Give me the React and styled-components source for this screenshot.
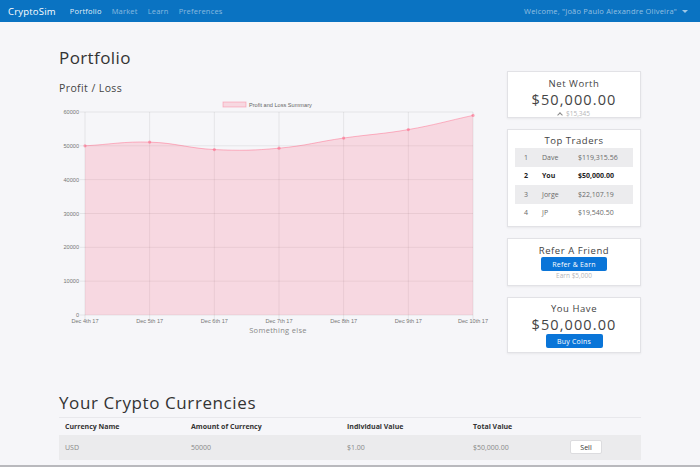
import React from "react";
import styled, { createGlobalStyle } from "styled-components";

const GlobalStyle = createGlobalStyle`
  html, body {
    margin: 0;
    padding: 0;
    background: #f6f6f9;
    font-family: "Open Sans", Lato, sans-serif;
    color: #444;
  }
  * { box-sizing: border-box; }
`;

const Page = styled.div`
  height: 467px;
  overflow: hidden;
  border-bottom: 2px solid #b9b9bd;
`;

const Navbar = styled.nav`
  height: 22px;
  background: #0a73c2;
  display: flex;
  align-items: center;
  padding: 0 8px;
  font-size: 7.5px;
  letter-spacing: 0.2px;
`;

const Brand = styled.span`
  color: #fff;
  font-size: 9.5px;
  margin-right: 14px;
`;

const NavLink = styled.a`
  color: ${(p) => (p.active ? "rgba(255,255,255,0.9)" : "rgba(255,255,255,0.5)")};
  margin-right: 10px;
  text-decoration: none;
`;

const Welcome = styled.span`
  margin-left: auto;
  color: rgba(255, 255, 255, 0.55);
  display: flex;
  align-items: center;
  gap: 5px;
  margin-right: 4px;
`;

const Caret = styled.span`
  width: 0;
  height: 0;
  border-left: 3px solid transparent;
  border-right: 3px solid transparent;
  border-top: 3px solid rgba(255, 255, 255, 0.6);
`;

const Container = styled.main`
  width: 582px;
  margin: 0 auto;
`;

const TopRow = styled.div`
  display: flex;
  gap: 17px;
`;

const LeftCol = styled.div`
  width: 431px;
`;

const RightCol = styled.div`
  width: 134px;
  padding-top: 49px;
  display: flex;
  flex-direction: column;
  gap: 11px;
`;

const PageTitle = styled.h1`
  margin: 26px 0 0;
  font-size: 17px;
  line-height: 20px;
  font-weight: 400;
  letter-spacing: 0.4px;
  color: #333;
`;

const SubTitle = styled.h5`
  margin: 13px 0 0;
  font-size: 10.5px;
  line-height: 14px;
  font-weight: 400;
  letter-spacing: 0.4px;
  color: #444;
`;

const ChartBox = styled.div`
  margin-top: 4px;
  height: 240px;
`;

const Card = styled.div`
  background: #fff;
  border: 1px solid #e2e2e6;
  box-shadow: 0 1px 2px rgba(0, 0, 0, 0.06);
  height: ${(p) => p.h}px;
  display: flex;
  flex-direction: column;
  align-items: center;
  padding: ${(p) => p.pad}px 7px 0;
`;

const CardTitle = styled.div`
  font-size: 9.5px;
  line-height: normal;
  letter-spacing: 0.55px;
  color: #444;
`;

const BigValue = styled.div`
  font-size: 14.5px;
  line-height: normal;
  letter-spacing: 1.1px;
  color: #444;
`;

const Muted = styled.div`
  font-size: 6.5px;
  line-height: normal;
  color: #b5b5b8;
  display: flex;
  align-items: center;
  gap: 4px;
`;

const Chevron = styled.span`
  width: 4px;
  height: 4px;
  border-left: 1.2px solid #888;
  border-top: 1.2px solid #888;
  transform: rotate(45deg);
  margin-top: 3px;
`;

const Traders = styled.table`
  width: 100%;
  border-collapse: collapse;
  margin-top: 1px;
  font-size: 7px;
  color: #666;
`;

const TraderRow = styled.tr`
  background: ${(p) => (p.striped ? "#ececee" : "transparent")};
  font-weight: ${(p) => (p.me ? 700 : 400)};
  color: ${(p) => (p.me ? "#222" : "#6a6a6a")};
  height: 18.5px;
  td { padding: 0; }
  td:first-child { padding-left: 9px; width: 27px; }
  td:nth-child(2) { width: 36px; }
`;

const BlueButton = styled.button`
  background: #0a75d8;
  color: #fff;
  border: none;
  border-radius: 2px;
  font-family: inherit;
  font-size: 7px;
  letter-spacing: 0.2px;
  height: 14px;
  width: ${(p) => p.w}px;
  padding: 0;
`;

const SectionTitle = styled.h2`
  margin: 40px 0 4px;
  font-size: 17px;
  line-height: 20px;
  font-weight: 400;
  letter-spacing: 0.6px;
  color: #333;
`;

const Table = styled.table`
  width: 100%;
  table-layout: fixed;
  border-collapse: collapse;
  font-size: 7px;
`;

const HeadCell = styled.th`
  text-align: left;
  font-weight: 700;
  color: #333;
  height: 17px;
  padding: 0 0 0 6px;
  border-top: 1px solid #e8e8ec;
  width: ${(p) => p.w || "auto"};
`;

const BodyRow = styled.tr`
  background: #ebebed;
  height: 25px;
`;

const Cell = styled.td`
  color: #888;
  padding: 0 0 0 ${(p) => (p.flush ? 0 : 6)}px;
`;

const SellButton = styled.button`
  background: #fff;
  border: 1px solid #dcdcdf;
  border-radius: 2px;
  font-family: inherit;
  font-size: 7px;
  color: #333;
  width: 32px;
  height: 14px;
  padding: 0;
`;

const values = [50000, 51100, 48900, 49300, 52300, 54800, 59000];
const labels = ["Dec 4th 17", "Dec 5th 17", "Dec 6th 17", "Dec 7th 17", "Dec 8th 17", "Dec 9th 17", "Dec 10th 17"];
const X0 = 26;
const X1 = 414;
const Y0 = 13;
const Y1 = 216;

function buildPath(pts) {
  const t = 0.4;
  const cps = pts.map((p, i) => {
    const prev = pts[i - 1] || p;
    const next = pts[i + 1] || p;
    const d01 = Math.hypot(p.x - prev.x, p.y - prev.y);
    const d12 = Math.hypot(next.x - p.x, next.y - p.y);
    const sum = d01 + d12 || 1;
    const fa = (t * d01) / sum;
    const fb = (t * d12) / sum;
    return {
      inX: p.x - fa * (next.x - prev.x),
      inY: p.y - fa * (next.y - prev.y),
      outX: p.x + fb * (next.x - prev.x),
      outY: p.y + fb * (next.y - prev.y),
    };
  });
  let d = `M${pts[0].x},${pts[0].y}`;
  for (let i = 1; i < pts.length; i++) {
    d += ` C${cps[i - 1].outX},${cps[i - 1].outY} ${cps[i].inX},${cps[i].inY} ${pts[i].x},${pts[i].y}`;
  }
  return d;
}

const ProfitChart = () => {
  const step = (X1 - X0) / (values.length - 1);
  const pts = values.map((v, i) => ({ x: X0 + i * step, y: Y1 - (v / 60000) * (Y1 - Y0) }));
  const line = buildPath(pts);
  const area = `${line} L${X1},${Y1} L${X0},${Y1} Z`;
  const ticks = [0, 10000, 20000, 30000, 40000, 50000, 60000];
  return (
    <svg width="431" height="240" viewBox="0 0 431 240" fontFamily="'Liberation Sans', Arial, sans-serif">
      <rect x="164" y="3" width="23" height="5" fill="rgba(255,99,132,0.2)" stroke="rgba(255,99,132,0.45)" strokeWidth="0.8" />
      <text x="190" y="7.5" fontSize="5.6" fill="#666">Profit and Loss Summary</text>
      {ticks.map((v) => {
        const y = Y1 - (v / 60000) * (Y1 - Y0);
        return (
          <g key={v}>
            <line x1={X0 - 5} x2={X1} y1={y} y2={y} stroke="rgba(0,0,0,0.09)" strokeWidth="0.8" />
            <text x={X0 - 6} y={y + 2} fontSize="5.6" fill="#777" textAnchor="end">{v}</text>
          </g>
        );
      })}
      {pts.map((p, i) => (
        <g key={i}>
          <line x1={p.x} x2={p.x} y1={Y0} y2={Y1 + 4} stroke="rgba(0,0,0,0.09)" strokeWidth="0.8" />
          <text x={p.x} y={Y1 + 8} fontSize="5.6" fill="#777" textAnchor="middle">{labels[i]}</text>
        </g>
      ))}
      <path d={area} fill="rgba(255,99,132,0.2)" />
      <path d={line} fill="none" stroke="rgba(255,99,132,0.45)" strokeWidth="1" />
      {pts.map((p, i) => (
        <circle key={i} cx={p.x} cy={p.y} r="1.6" fill="rgba(255,99,132,0.55)" />
      ))}
      <text x="219" y="234" fontSize="7.5" fill="#888" textAnchor="middle" letterSpacing="0.3" fontFamily="'Open Sans', sans-serif">Something else</text>
    </svg>
  );
};

const traders = [
  ["1", "Dave", "$119,315.56"],
  ["2", "You", "$50,000.00"],
  ["3", "Jorge", "$22,107.19"],
  ["4", "JP", "$19,540.50"],
];

export default function App() {
  return (
    <Page>
      <GlobalStyle />
      <Navbar>
        <Brand>CryptoSim</Brand>
        <NavLink active>Portfolio</NavLink>
        <NavLink>Market</NavLink>
        <NavLink>Learn</NavLink>
        <NavLink>Preferences</NavLink>
        <Welcome>
          Welcome, "João Paulo Alexandre Oliveira" <Caret />
        </Welcome>
      </Navbar>
      <Container>
        <TopRow>
          <LeftCol>
            <PageTitle>Portfolio</PageTitle>
            <SubTitle>Profit / Loss</SubTitle>
            <ChartBox>
              <ProfitChart />
            </ChartBox>
          </LeftCol>
          <RightCol>
            <Card h={47} pad={5}>
              <CardTitle>Net Worth</CardTitle>
              <BigValue>$50,000.00</BigValue>
              <Muted>
                <Chevron /> $15,345
              </Muted>
            </Card>
            <Card h={98} pad={4}>
              <CardTitle>Top Traders</CardTitle>
              <Traders>
                <tbody>
                  {traders.map((r, i) => (
                    <TraderRow key={r[0]} striped={i % 2 === 0} me={r[1] === "You"}>
                      <td>{r[0]}</td>
                      <td>{r[1]}</td>
                      <td>{r[2]}</td>
                    </TraderRow>
                  ))}
                </tbody>
              </Traders>
            </Card>
            <Card h={48} pad={5}>
              <CardTitle>Refer A Friend</CardTitle>
              <BlueButton w={66}>Refer &amp; Earn</BlueButton>
              <Muted>Earn $5,000</Muted>
            </Card>
            <Card h={56} pad={4}>
              <CardTitle>You Have</CardTitle>
              <BigValue>$50,000.00</BigValue>
              <BlueButton w={57}>Buy Coins</BlueButton>
            </Card>
          </RightCol>
        </TopRow>
        <SectionTitle>Your Crypto Currencies</SectionTitle>
        <Table>
          <thead>
            <tr>
              <HeadCell w="126px">Currency Name</HeadCell>
              <HeadCell w="156px">Amount of Currency</HeadCell>
              <HeadCell w="126px">Individual Value</HeadCell>
              <HeadCell w="103px">Total Value</HeadCell>
              <HeadCell />
            </tr>
          </thead>
          <tbody>
            <BodyRow>
              <Cell>USD</Cell>
              <Cell>50000</Cell>
              <Cell>$1.00</Cell>
              <Cell>$50,000.00</Cell>
              <Cell flush>
                <SellButton>Sell</SellButton>
              </Cell>
            </BodyRow>
          </tbody>
        </Table>
      </Container>
    </Page>
  );
}
